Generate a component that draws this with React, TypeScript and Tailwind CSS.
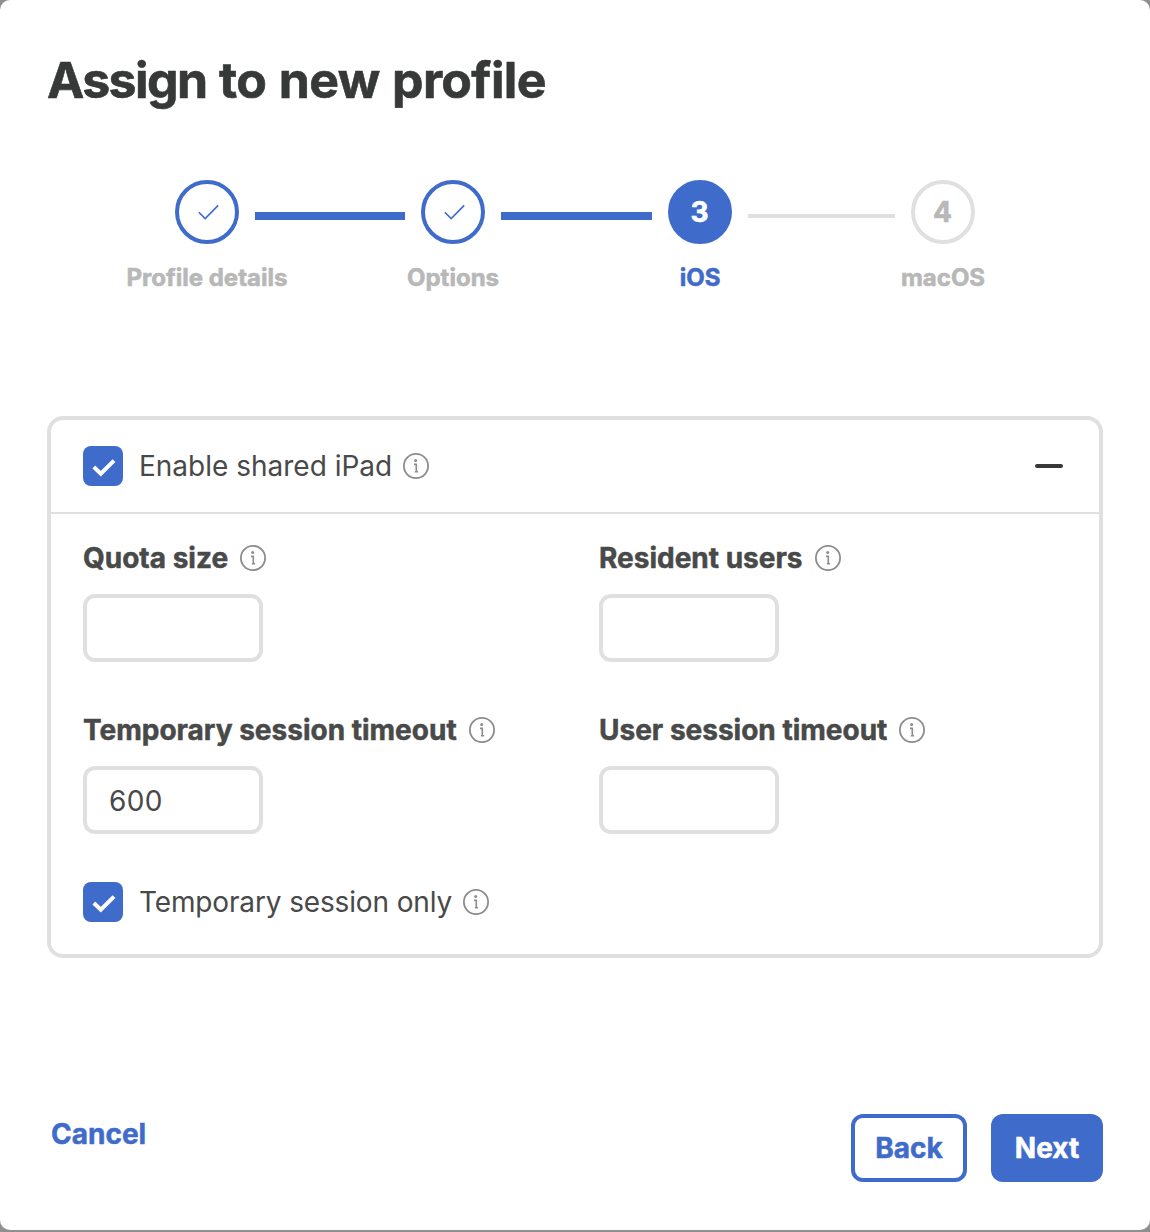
import { useState } from "react"
import clsx from "clsx"

function InfoIcon() {
  return (
    <svg width="26" height="26" viewBox="0 0 26 26" fill="none" className="shrink-0 text-[#8b8c8c]">
      <circle cx="13" cy="13" r="12.1" stroke="currentColor" strokeWidth="1.8" />
      <circle cx="12.7" cy="7.5" r="1.5" fill="currentColor" />
      <path d="M11 11.4h2.3v7.4M11.9 18.8h3.2" stroke="currentColor" strokeWidth="1.6" />
    </svg>
  )
}

function StepCheck() {
  return (
    <svg width="22" height="16" viewBox="0 0 22 16" fill="none" className="ml-[3px]">
      <path d="M0.8 8.2L7.2 14.5L20.2 1.4" stroke="#3f6bcb" strokeWidth="1.6" />
    </svg>
  )
}

type StepProps = {
  number: number
  label: string
  state: "done" | "current" | "todo"
}

function Step({ number, label, state }: StepProps) {
  return (
    <div className="flex w-16 flex-col items-center [-webkit-text-stroke:0.6px]">
      <div
        className={clsx(
          "flex size-16 shrink-0 items-center justify-center rounded-full border-4 text-[28px] font-bold",
          state === "done" && "border-[#3f6bcb]",
          state === "current" && "border-[#3f6bcb] bg-[#3f6bcb] text-white",
          state === "todo" && "border-[#e0e0e0] text-[#b8b8b8]"
        )}
      >
        {state === "done" ? <StepCheck /> : <span className="-ml-px">{number}</span>}
      </div>
      <span
        className={clsx(
          "mt-[18px] text-2xl leading-8 font-bold whitespace-nowrap",
          state === "current" ? "text-[#3f6bcb]" : "text-[#b8b8b8]"
        )}
      >
        {label}
      </span>
    </div>
  )
}

type CheckboxProps = {
  label: string
  labelClassName?: string
  checked: boolean
  onChange: () => void
}

function Checkbox({ label, labelClassName, checked, onChange }: CheckboxProps) {
  return (
    <div className="flex h-10 items-center">
      <button
        type="button"
        role="checkbox"
        aria-checked={checked}
        aria-label={label}
        onClick={onChange}
        className="flex size-10 shrink-0 items-center justify-center rounded-lg bg-[#3f6bcb]"
      >
        {checked && (
          <svg width="40" height="40" viewBox="0 0 40 40" fill="none">
            <path d="M10.8 21L17.8 27.7L31 14.6" stroke="white" strokeWidth="4" />
          </svg>
        )}
      </button>
      <span className={clsx("mr-[11px] ml-4 text-[28px] whitespace-nowrap", labelClassName)}>{label}</span>
      <InfoIcon />
    </div>
  )
}

function Field({ label, defaultValue = "" }: { label: string; defaultValue?: string }) {
  return (
    <div>
      <div className="flex h-10 items-center gap-3">
        <label className="text-[28px] font-bold whitespace-nowrap [-webkit-text-stroke:0.5px]">{label}</label>
        <InfoIcon />
      </div>
      <input
        aria-label={label}
        defaultValue={defaultValue}
        className="mt-4 block h-[68px] w-[180px] rounded-xl border-4 border-[#e0e0e0] px-[22px] pt-0.5 text-[28px] tracking-[0.3px] outline-none"
      />
    </div>
  )
}

export default function App() {
  const [shared, setShared] = useState(true)
  const [temporary, setTemporary] = useState(true)

  return (
    <div className="h-[1232px] w-[1150px] bg-[#8f8f8f] font-['Inter',sans-serif] text-[#484949]">
      <div className="flex h-[1230px] flex-col rounded-[10px] bg-white pr-[47px] pl-[47px]">
        <h1 className="mt-12 h-16 text-[50px] leading-[64px] font-bold tracking-[-0.7px] whitespace-nowrap text-[#373838] [word-spacing:1.5px] [-webkit-text-stroke:0.6px]">
          <span className="tracking-[-1.6px]">Assign</span> to new profile
        </h1>

        <div className="mt-[68px] ml-32 flex h-[120px] gap-4">
          <Step number={1} label="Profile details" state="done" />
          <div className="mt-8 h-2 w-[150px] bg-[#3f6bcb]" />
          <Step number={2} label="Options" state="done" />
          <div className="mt-8 h-2 w-[151px] bg-[#3f6bcb]" />
          <Step number={3} label="iOS" state="current" />
          <div className="mt-[34px] h-1 w-[147px] bg-[#e0e0e0]" />
          <Step number={4} label="macOS" state="todo" />
        </div>

        <div className="mt-[116px] h-[542px] rounded-2xl border-4 border-[#e0e0e0]">
          <div className="flex h-[94px] items-center justify-between border-b-2 border-[#e0e0e0] pr-9 pl-8">
            <Checkbox label="Enable shared iPad" checked={shared} onChange={() => setShared(!shared)} />
            <div className="h-1 w-7 rounded-sm bg-[#373838]" />
          </div>
          <div className="px-8 pt-6">
            <div className="grid grid-cols-[516px_1fr] gap-y-12">
              <Field label="Quota size" />
              <Field label="Resident users" />
              <Field label="Temporary session timeout" defaultValue="600" />
              <Field label="User session timeout" />
            </div>
            <div className="mt-12">
              <Checkbox
                label="Temporary session only"
                labelClassName="tracking-[-0.14px]"
                checked={temporary}
                onChange={() => setTemporary(!temporary)}
              />
            </div>
          </div>
        </div>

        <div className="mt-[156px] flex items-start justify-between text-[28px] font-bold [-webkit-text-stroke:0.5px]">
          <button type="button" className="ml-1 h-10 leading-10 text-[#3f6bcb]">
            Cancel
          </button>
          <div className="flex gap-6">
            <button
              type="button"
              className="h-[68px] w-[116px] rounded-xl border-4 border-[#3f6bcb] text-[#3f6bcb]"
            >
              Back
            </button>
            <button type="button" className="h-[68px] w-28 rounded-xl bg-[#3f6bcb] text-white">
              Next
            </button>
          </div>
        </div>
      </div>
    </div>
  )
}
